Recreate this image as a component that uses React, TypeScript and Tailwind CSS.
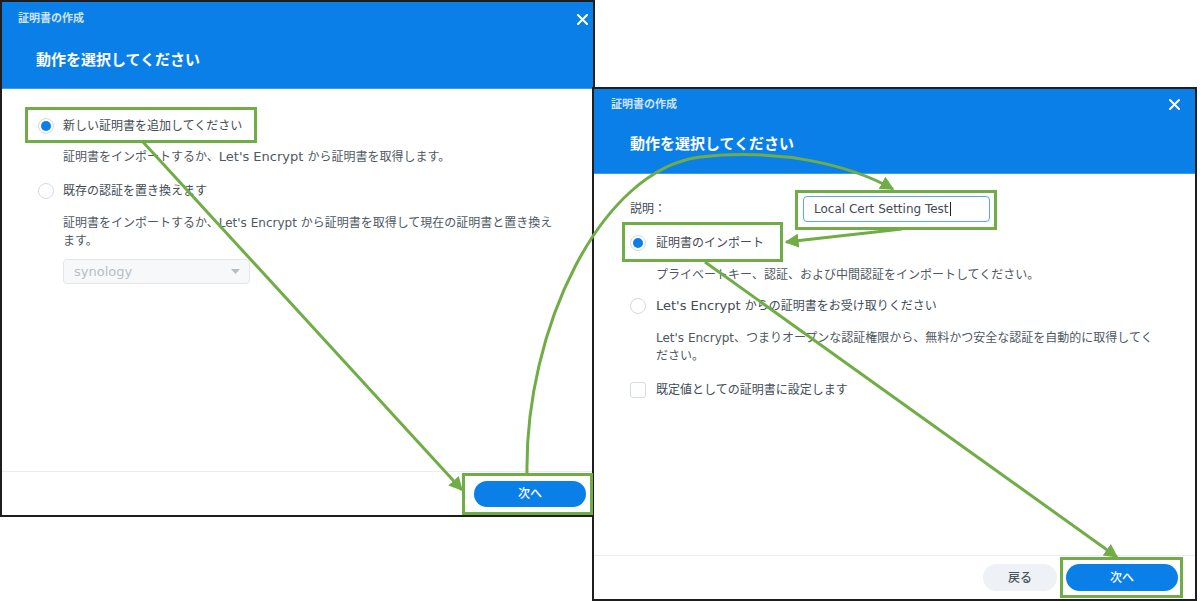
import type { ReactNode } from 'react'

const En = ({ children }: { children: ReactNode }) => <span className="text-[13px] leading-none">{children}</span>

function Radio({ checked }: { checked?: boolean }) {
  return (
    <span className="flex h-4 w-4 shrink-0 items-center justify-center rounded-full border border-[#d3dae2] bg-white">
      {checked && <span className="h-[10px] w-[10px] rounded-full bg-[#0a7fe8]" />}
    </span>
  )
}

function CloseIcon() {
  return (
    <svg width="11" height="11" viewBox="0 0 11 11" className="shrink-0">
      <path d="M1 1 L10 10 M10 1 L1 10" stroke="#fff" strokeWidth="2" strokeLinecap="round" />
    </svg>
  )
}

function Arrows() {
  const green = '#70ad47'
  return (
    <svg width="1200" height="601" viewBox="0 0 1200 601" className="pointer-events-none absolute left-0 top-0 z-10">
      <defs>
        <marker id="head" viewBox="0 0 10 10" refX="9" refY="5" markerWidth="14" markerHeight="14" markerUnits="userSpaceOnUse" orient="auto">
          <path d="M0 0 L10 5 L0 10 Z" fill={green} />
        </marker>
      </defs>
      {/* annotation boxes */}
      <rect x="26.5" y="108.5" width="229" height="33" fill="none" stroke={green} strokeWidth="3" />
      <rect x="463.5" y="474.5" width="128" height="39" fill="none" stroke={green} strokeWidth="3" />
      <rect x="796.5" y="191.5" width="199" height="37" fill="none" stroke={green} strokeWidth="3" />
      <rect x="623.5" y="223.5" width="158" height="37" fill="none" stroke={green} strokeWidth="3" />
      <rect x="1061.5" y="558.5" width="120" height="38" fill="none" stroke={green} strokeWidth="3" />
      {/* arrows */}
      <path d="M143 142 L462 490" stroke={green} strokeWidth="3" fill="none" markerEnd="url(#head)" />
      <path d="M527 473 C525 330 600 170 700 157 C780 148 850 165 893 189" stroke={green} strokeWidth="3" fill="none" markerEnd="url(#head)" />
      <path d="M902 229 L786 242" stroke={green} strokeWidth="3" fill="none" markerEnd="url(#head)" />
      <path d="M705 262 L1117 557" stroke={green} strokeWidth="3" fill="none" markerEnd="url(#head)" />
    </svg>
  )
}

export default function App() {
  return (
    <div className="relative h-[601px] w-[1200px] overflow-hidden bg-white font-[family-name:'DejaVu_Sans','Noto_Sans_CJK_JP',sans-serif] text-[12px] leading-[18px] text-[#414b55]">
      {/* first dialog */}
      <div className="absolute left-0 top-0 flex h-[517px] w-[595px] flex-col border-2 border-[#1e1e1e] bg-white">
        <div className="h-[87px] shrink-0 border-b border-[#3d9bf0] bg-[#0a7fe8]">
          <div className="flex h-[34px] items-center justify-between pl-4 pr-[5px]">
            <span className="text-[11px] font-bold leading-[14px] text-[#cfe3fb]">証明書の作成</span>
            <CloseIcon />
          </div>
          <div className="mt-[14px] pl-[34px] text-[15px] font-bold leading-5 text-white">動作を選択してください</div>
        </div>

        <div className="flex flex-col pl-9 pt-[28px]">
          <div className="flex h-[18px] items-center gap-[9px]">
            <Radio checked />
            <span>新しい証明書を追加してください</span>
          </div>
          <p className="mt-[13px] pl-[25px] text-[#4e5863]">
            証明書をインポートするか、<En>Let's Encrypt </En>から証明書を取得します。
          </p>
          <div className="mt-[16px] flex h-[18px] items-center gap-[9px]">
            <Radio />
            <span>既存の認証を置き換えます</span>
          </div>
          <p className="mr-[33px] mt-[14px] pl-[25px] text-[#4e5863]">
            証明書をインポートするか、Let's Encrypt から証明書を取得して現在の証明書と置き換えます。
          </p>
          <div className="ml-[25px] mt-[9px] flex h-[25px] w-[187px] items-center justify-between rounded border border-[#e2e6eb] bg-[#f7f8fa] pl-[10px] pr-[9px]">
            <span className="text-[13px] text-[#b6bdc6]">synology</span>
            <svg width="9" height="5" viewBox="0 0 9 5">
              <path d="M0 0 L9 0 L4.5 5 Z" fill="#b6bdc6" />
            </svg>
          </div>
        </div>

        <div className="mt-auto flex h-[44px] shrink-0 justify-end border-t border-[#e8edf2] pr-[7px] pt-[9px]">
          <button className="h-[26px] w-[112px] rounded-full bg-[#0a7fe8] text-[12px] font-medium text-white">次へ</button>
        </div>
      </div>

      {/* second dialog */}
      <div className="absolute left-[592px] top-[87px] flex h-[514px] w-[605px] flex-col border-2 border-[#1e1e1e] bg-white">
        <div className="h-[85px] shrink-0 border-b border-[#3d9bf0] bg-[#0a7fe8]">
          <div className="flex h-[31px] items-center justify-between pl-[17px] pr-[15px]">
            <span className="text-[11px] font-bold leading-[14px] text-[#cfe3fb]">証明書の作成</span>
            <CloseIcon />
          </div>
          <div className="mt-[14px] pl-9 text-[15px] font-bold leading-5 text-white">動作を選択してください</div>
        </div>

        <div className="flex flex-col pl-9 pt-[22px]">
          <div className="flex h-[26px] items-center">
            <span className="w-[173px]">説明：</span>
            <div className="flex h-[26px] w-[187px] items-center rounded border border-[#5aa6ef] bg-white pl-[10px] text-[#414b55]">
              <span>Local Cert Setting Test</span>
              <span className="ml-px h-[14px] w-px bg-[#222]" />
            </div>
          </div>
          <div className="mt-[12px] flex h-[18px] items-center gap-[10px]">
            <Radio checked />
            <span>証明書のインポート</span>
          </div>
          <p className="mt-[14px] pl-[26px] text-[#4e5863]">プライベートキー、認証、および中間認証をインポートしてください。</p>
          <div className="mt-[13px] flex h-[18px] items-center gap-[10px]">
            <Radio />
            <span>
              <En>Let's Encrypt </En>からの証明書をお受け取りください
            </span>
          </div>
          <p className="mr-[37px] mt-[14px] pl-[26px] text-[#4e5863]">
            Let's Encrypt、つまりオープンな認証権限から、無料かつ安全な認証を自動的に取得してください。
          </p>
          <div className="mt-[16px] flex h-[18px] items-center gap-[10px]">
            <span className="h-4 w-4 shrink-0 rounded-[3px] border border-[#d3dae2] bg-white" />
            <span>既定値としての証明書に設定します</span>
          </div>
        </div>

        <div className="mt-auto flex h-[44px] shrink-0 justify-end gap-[9px] border-t border-[#e8edf2] pr-[17px] pt-[8px]">
          <button className="h-[27px] w-[74px] rounded-full bg-[#eef1f5] text-[12px] font-medium text-[#4a5560]">戻る</button>
          <button className="h-[27px] w-[112px] rounded-full bg-[#0a7fe8] text-[12px] font-medium text-white">次へ</button>
        </div>
      </div>

      <Arrows />
    </div>
  )
}
